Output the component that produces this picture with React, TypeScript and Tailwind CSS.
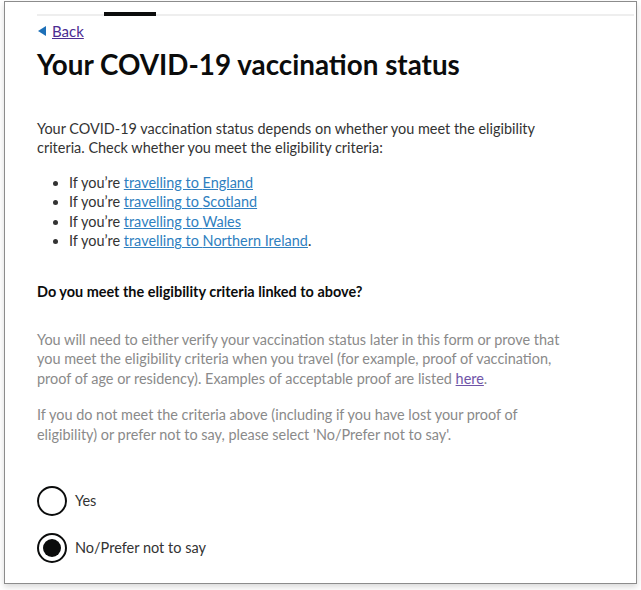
const links = ['England', 'Scotland', 'Wales', 'Northern Ireland'];

const Radio = ({ label, checked }: { label: string; checked?: boolean }) => (
  <div className="flex items-center gap-[8px]">
    <div className="w-[30px] h-[30px] rounded-full border-2 border-[#0b0c0c] flex items-center justify-center">
      {checked && <div className="w-[18px] h-[18px] rounded-full bg-[#0b0c0c]" />}
    </div>
    <span className="text-[14.5px] text-[#333]">{label}</span>
  </div>
);

export default function App() {
  return (
    <div className="w-[641px] h-[590px] bg-white overflow-hidden" style={{ fontFamily: 'Lato, Arial, sans-serif' }}>
      <div className="ml-[4px] mt-[1px] w-[633px] h-[583px] border border-[#8c8c8c] shadow-[0_3px_6px_rgba(0,0,0,0.15)] bg-white">
        <div className="pl-[32px] pr-[2px] pt-[10px]">
          {/* progress line */}
          <div className="relative h-[4px] border-b-2 border-[#eeeeee]">
            <div className="absolute left-[67px] top-0 w-[52px] h-[4px] bg-[#0b0c0c]" />
          </div>

          <a className="mt-[4px] flex items-center gap-[6px] text-[15px] text-[#4c2c92] underline w-fit">
            <svg width="8" height="10" viewBox="0 0 8 10" className="ml-[1px]">
              <path d="M0 5 L8 0 L8 10 Z" fill="#1d70b8" />
            </svg>
            <span>Back</span>
          </a>

          <h1 className="mt-[4px] text-[27.8px] font-bold text-[#0b0c0c] leading-[36px]">
            Your COVID-19 vaccination status
          </h1>

          <div className="w-[526px]">
            <p className="mt-[36px] text-[14.45px] leading-[19.5px] text-[#333]">
              Your COVID-19 vaccination status depends on whether you meet the eligibility criteria. Check whether you meet the eligibility criteria:
            </p>

            <ul className="mt-[15px] pl-[32px] list-disc text-[14.45px] leading-[19.5px] text-[#333]">
              {links.map((l, i) => (
                <li key={l}>
                  If you’re <a className="text-[#2f7fbf] underline">travelling to {l}</a>
                  {i === links.length - 1 && '.'}
                </li>
              ))}
            </ul>

            <h2 className="mt-[31px] text-[14.45px] font-bold text-[#0b0c0c] leading-[20px]">
              Do you meet the eligibility criteria linked to above?
            </h2>

            <p className="mt-[28px] text-[14.45px] leading-[19.5px] text-[#8a8a8a]">
              You will need to either verify your vaccination status later in this form or prove that you meet the eligibility criteria when you travel (for example, proof of vaccination, proof of age or residency). Examples of acceptable proof are listed{' '}
              <span className="whitespace-nowrap">
                <a className="text-[#6f55a8] underline">here</a>.
              </span>
            </p>

            <p className="mt-[17px] text-[14.45px] leading-[19.5px] text-[#8a8a8a] pr-[30px]">
              If you do not meet the criteria above (including if you have lost your proof of eligibility) or prefer not to say, please select 'No/Prefer not to say'.
            </p>
          </div>

          <div className="mt-[42px] flex flex-col gap-[17px]">
            <Radio label="Yes" />
            <Radio label="No/Prefer not to say" checked />
          </div>
        </div>
      </div>
    </div>
  );
}
